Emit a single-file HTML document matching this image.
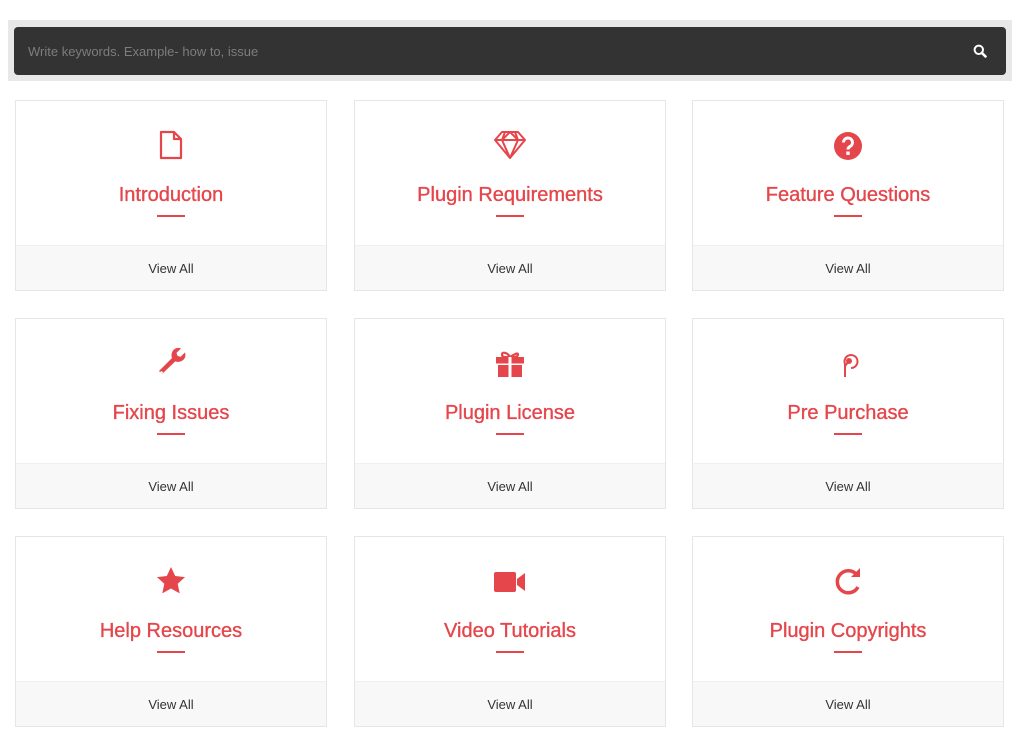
<!DOCTYPE html>
<html><head><meta charset="utf-8"><style>
*{margin:0;padding:0;box-sizing:border-box}
body{width:1024px;height:750px;background:#fff;font-family:"Liberation Sans",sans-serif;position:relative;overflow:hidden}
.sw{position:absolute;left:8px;top:20px;width:1004px;height:61px;background:#e8e8e8}
.sb{position:absolute;left:14px;top:27px;width:992px;height:48px;background:#333;border-radius:4px}
.sb span{position:absolute;left:14px;top:17px;font-size:13px;color:#7d7d7d}
.sb svg{position:absolute;right:19px;top:17px}
.card{position:absolute;width:312px;height:191px;border:1px solid #e6e6e6;background:#fff}
.card .ic{position:absolute;left:0;right:0;top:28px;height:32px;text-align:center}
.card h3{position:absolute;left:0;right:0;top:83px;text-align:center;font-size:20px;font-weight:normal;color:#e5464b;-webkit-text-stroke:0.35px #e5464b}
.card .ln{position:absolute;left:141px;top:114px;width:28px;height:2px;background:#e5464b}
.card .ft{position:absolute;left:0;right:0;bottom:0;height:45px;background:#f8f8f8;border-top:1px solid #f0f0f0;text-align:center;line-height:46px;font-size:13px;color:#333}
</style></head><body>
<div class="sw"></div>
<div class="sb"><span>Write keywords. Example- how to, issue</span>
<svg width="14" height="14" viewBox="0 0 14 14"><circle cx="5.8" cy="5.8" r="4.2" fill="none" stroke="#fff" stroke-width="2"/><path d="M8.8 8.8L12.5 12.5" stroke="#fff" stroke-width="2.6" stroke-linecap="round"/></svg></div>

<div class="card" style="left:15px;top:100px"><div class="ic"><svg width="26" height="32" viewBox="0 0 26 32"><path d="M3 3h13l7 7v19H3z M16 3v7h7" fill="none" stroke="#e5464b" stroke-width="2.2" stroke-linejoin="round"/></svg></div><h3>Introduction</h3><div class="ln"></div><div class="ft">View All</div></div>

<div class="card" style="left:354px;top:100px"><div class="ic"><svg width="34" height="32" viewBox="0 0 34 32"><path d="M9 3h16l7 8-15 18L2 11z M2 11h30 M12 3l-3 8 8 18 8-18-3-8 M9 11l8-8 8 8" fill="none" stroke="#e5464b" stroke-width="2" stroke-linejoin="round"/></svg></div><h3>Plugin Requirements</h3><div class="ln"></div><div class="ft">View All</div></div>

<div class="card" style="left:692px;top:100px"><div class="ic"><svg width="30" height="32" viewBox="0 0 30 32"><circle cx="15" cy="17" r="14" fill="#e5464b"/><path d="M10.5 13.5a4.5 4.5 0 1 1 6.5 4c-1.5.8-2 1.5-2 3" fill="none" stroke="#fff" stroke-width="3"/><rect x="13.3" y="22.5" width="3.4" height="3.4" fill="#fff"/></svg></div><h3>Feature Questions</h3><div class="ln"></div><div class="ft">View All</div></div>

<div class="card" style="left:15px;top:318px"><div class="ic"><svg width="32" height="32" viewBox="0 0 32 32"><path d="M5 28l13-13c-1.5-4 .5-9 5-10 1.5-.3 3 0 4 .4l-4.5 4.5 1 3 3 1 4.5-4.5c.4 1 .5 2.5.3 4-1 4.5-6 6.5-10 5L8 31z" fill="#e5464b" transform="translate(-1,-4)"/><circle cx="6.5" cy="25.5" r="1.3" fill="#fff"/></svg></div><h3>Fixing Issues</h3><div class="ln"></div><div class="ft">View All</div></div>

<div class="card" style="left:354px;top:318px"><div class="ic"><svg width="32" height="32" viewBox="0 0 32 32"><path d="M16 10c-2-4-8-6-8-2.5s5 2.5 8 2.5c3 0 8 .5 8-2.5s-6 1.5-8 2.5z" fill="none" stroke="#e5464b" stroke-width="2.2"/><rect x="2" y="10" width="28" height="6.5" fill="#e5464b"/><rect x="4" y="18" width="24" height="12" fill="#e5464b"/><rect x="14.5" y="10" width="3" height="20" fill="#fff"/></svg></div><h3>Plugin License</h3><div class="ln"></div><div class="ft">View All</div></div>

<div class="card" style="left:692px;top:318px"><div class="ic"><svg width="32" height="32" viewBox="0 0 32 32"><path d="M13 30V17a6.5 6.5 0 1 1 6 4" fill="none" stroke="#e5464b" stroke-width="2"/><circle cx="17" cy="14" r="3" fill="#e5464b"/><path d="M17 14l-4 5" stroke="#e5464b" stroke-width="2"/></svg></div><h3>Pre Purchase</h3><div class="ln"></div><div class="ft">View All</div></div>

<div class="card" style="left:15px;top:536px"><div class="ic"><svg width="32" height="32" viewBox="0 0 32 32"><path d="M16 2l4.2 9 9.8 1.1-7.3 6.6 2 9.7L16 23.5l-8.7 4.9 2-9.7L2 12.1l9.8-1.1z" fill="#e5464b"/></svg></div><h3>Help Resources</h3><div class="ln"></div><div class="ft">View All</div></div>

<div class="card" style="left:354px;top:536px"><div class="ic"><svg width="34" height="32" viewBox="0 0 34 32"><rect x="1" y="7" width="22" height="20" rx="2" fill="#e5464b"/><path d="M24 14l8-6v18l-8-6z" fill="#e5464b"/></svg></div><h3>Video Tutorials</h3><div class="ln"></div><div class="ft">View All</div></div>

<div class="card" style="left:692px;top:536px"><div class="ic"><svg width="32" height="32" viewBox="0 0 32 32"><path d="M25 10A11 11 0 1 0 26 22" fill="none" stroke="#e5464b" stroke-width="3.5"/><path d="M19 12h9V3z" fill="#e5464b"/></svg></div><h3>Plugin Copyrights</h3><div class="ln"></div><div class="ft">View All</div></div>
</body></html>
